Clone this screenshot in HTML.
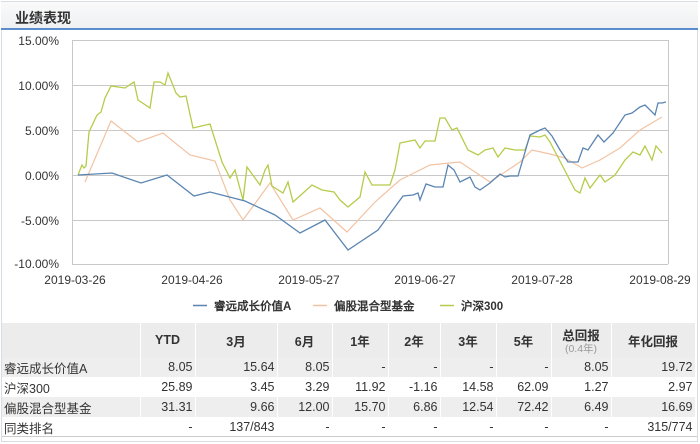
<!DOCTYPE html>
<html><head><meta charset="utf-8"><style>
*{margin:0;padding:0;box-sizing:border-box}
body{width:700px;height:444px;background:#fff;font-family:"Liberation Sans","Noto Sans CJK SC",sans-serif;position:relative;overflow:hidden;color:#333}
.frame{position:absolute;left:1px;top:1px;width:697px;height:441px;border:1px solid #d6dde5}
.title{position:absolute;left:1px;top:2px;width:697px;height:27px;background:linear-gradient(#fafafa,#eef0f2)}
.title span{position:absolute;left:14px;top:6px;font-size:14px;font-weight:bold;color:#333}
.bar{position:absolute;left:1px;top:28px;width:697px;height:2px;background:#5b8ccc}
svg{position:absolute;left:0;top:0}
table{position:absolute;left:2px;top:323px;border-collapse:collapse;font-size:12.5px}
td{height:20px;padding:0 2px;text-align:right;border-right:1px solid #fff;white-space:nowrap;color:#333}
td:first-child{text-align:left}
tr.h td{height:34px;background:#ececec;font-weight:bold;text-align:center;font-size:12.5px}
tr.g td{background:#eeeeee}
tr.w td{background:#fff}
.sub{display:block;font-weight:normal;font-size:10.5px;color:#999;line-height:11px}
</style></head><body>
<div class="frame"></div>
<div class="title"><span>业绩表现</span></div>
<div class="bar"></div>
<svg width="700" height="320" font-family="Liberation Sans, sans-serif" font-size="12" fill="#333">
<g stroke="#c8c8c8" stroke-width="1">
<line x1="72" y1="40.5" x2="668" y2="40.5"/>
<line x1="72" y1="85.5" x2="668" y2="85.5"/>
<line x1="72" y1="130.5" x2="668" y2="130.5"/>
<line x1="72" y1="175.5" x2="668" y2="175.5"/>
<line x1="72" y1="220.5" x2="668" y2="220.5"/>
<line x1="72" y1="264.5" x2="668" y2="264.5"/>
<line x1="72.5" y1="40" x2="72.5" y2="264"/>
<line x1="668.5" y1="40" x2="668.5" y2="264"/>
</g>
<g text-anchor="end">
<text x="59" y="45">15.00%</text>
<text x="59" y="90">10.00%</text>
<text x="59" y="135">5.00%</text>
<text x="59" y="180">0.00%</text>
<text x="59" y="225">-5.00%</text>
<text x="59" y="268">-10.00%</text>
</g>
<g text-anchor="middle">
<text x="75" y="284">2019-03-26</text>
<text x="192" y="284">2019-04-26</text>
<text x="309" y="284">2019-05-27</text>
<text x="425" y="284">2019-06-27</text>
<text x="542" y="284">2019-07-28</text>
<text x="660" y="284">2019-08-29</text>
</g>
<polyline fill="none" stroke="#f2c3a3" stroke-width="1.2" points="85,182 111,121 138,142 163,133 190,155 215,161 230,200 243,220 270,183 293,220 320,208 347,232 375,202 400,180 430,165 460,162 490,182 520,162 532,150 550,154 565,158 582,168 600,160 620,148 640,130 662,117"/>
<polyline fill="none" stroke="#b5cc4a" stroke-width="1.3" points="78,175 82,165 84,168 86,166 89,132 97,115 101,112 105,98 111,86 125,88 134,82 138,100 150,108 154,82 160,82 165,85 168,73 176,93 180,97 186,96 193,128 210,124 222,162 230,178 235,170 243,200 247,167 260,185 265,170 268,165 272,186 283,193 288,182 293,202 312,185 322,190 334,192 340,200 348,207 360,197 365,172 372,185 378,185 390,185 395,170 400,143 415,140 420,148 425,141 435,141 440,118 445,118 452,130 457,128 468,150 478,155 485,150 493,148 498,157 505,148 515,150 525,150 530,136 540,137 545,135 550,142 562,165 575,190 580,193 585,178 590,188 600,175 605,182 615,175 625,160 633,152 640,155 645,146 652,160 656,146 662,153"/>
<polyline fill="none" stroke="#5a85b2" stroke-width="1.3" points="78,175 112,173 141,183 167,175 194,196 210,192 245,201 275,215 300,233 325,220 348,250 378,230 403,196 413,195 418,193 420,200 426,184 435,187 443,187 448,165 454,170 460,182 470,177 475,187 480,190 490,183 500,174 505,177 510,176 518,176 530,135 540,130 545,128 552,136 560,150 568,162 578,162 583,148 588,150 598,135 604,142 613,133 625,115 632,113 640,107 645,105 655,115 658,103 662,103 666,102"/>
<g font-size="11.5" font-weight="bold" fill="#333">
<line x1="193" y1="305.5" x2="207" y2="305.5" stroke="#5a85b2" stroke-width="1.5"/>
<text x="214" y="310">睿远成长价值A</text>
<line x1="313" y1="305.5" x2="327" y2="305.5" stroke="#f2c3a3" stroke-width="1.5"/>
<text x="334" y="310">偏股混合型基金</text>
<line x1="440" y1="305.5" x2="454" y2="305.5" stroke="#b5cc4a" stroke-width="1.5"/>
<text x="461" y="310">沪深300</text>
</g>
</svg>
<table>
<colgroup><col style="width:138px"><col style="width:55px"><col style="width:82px"><col style="width:55px"><col style="width:56px"><col style="width:52px"><col style="width:56px"><col style="width:55px"><col style="width:60px"><col style="width:84px"></colgroup>
<tr class="h"><td></td><td>YTD</td><td>3月</td><td>6月</td><td>1年</td><td>2年</td><td>3年</td><td>5年</td><td>总回报<span class="sub">(0.4年)</span></td><td>年化回报</td></tr>
<tr class="g"><td>睿远成长价值A</td><td>8.05</td><td>15.64</td><td>8.05</td><td>-</td><td>-</td><td>-</td><td>-</td><td>8.05</td><td>19.72</td></tr>
<tr class="w"><td>沪深300</td><td>25.89</td><td>3.45</td><td>3.29</td><td>11.92</td><td>-1.16</td><td>14.58</td><td>62.09</td><td>1.27</td><td>2.97</td></tr>
<tr class="g"><td>偏股混合型基金</td><td>31.31</td><td>9.66</td><td>12.00</td><td>15.70</td><td>6.86</td><td>12.54</td><td>72.42</td><td>6.49</td><td>16.69</td></tr>
<tr class="w"><td>同类排名</td><td>-</td><td>137/843</td><td>-</td><td>-</td><td>-</td><td>-</td><td>-</td><td>-</td><td>315/774</td></tr>
</table>
<div style="position:absolute;left:2px;top:436px;width:695px;height:1px;background:#ccc"></div>
</body></html>
